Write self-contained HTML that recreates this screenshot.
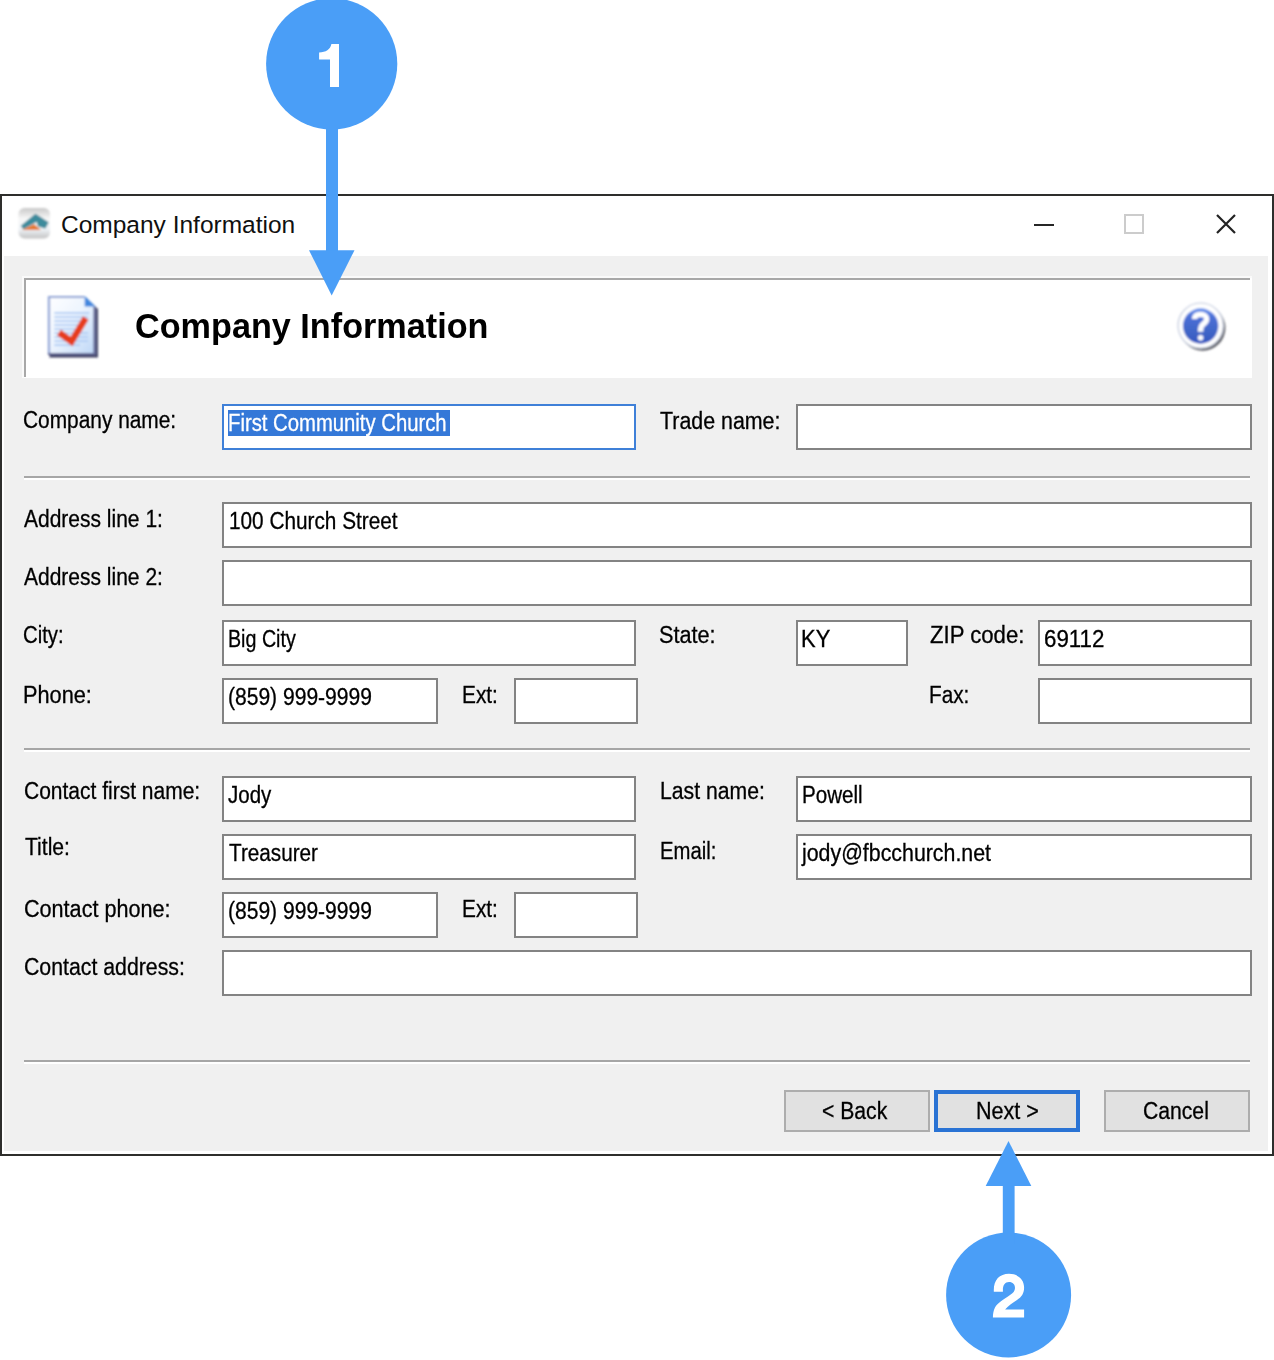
<!DOCTYPE html>
<html><head><meta charset="utf-8"><style>
html,body{margin:0;padding:0;background:#fff;width:1274px;height:1360px;overflow:hidden;position:relative;}
.t{position:absolute;font-family:"Liberation Sans", sans-serif;line-height:1;white-space:nowrap;transform-origin:0 0;}
.b{position:absolute;}
svg{position:absolute;overflow:visible;}
</style></head><body>
<div class="b" style="left:0px;top:194px;width:1274px;height:962px;background:#2e2e2c;"></div><div class="b" style="left:2px;top:196px;width:1270px;height:958px;background:#ffffff;"></div><div class="b" style="left:4px;top:256px;width:1264px;height:895px;background:#f0f0f0;"></div><svg style="left:0;top:0" width="1274" height="260" viewBox="0 0 1274 260">
<defs>
<linearGradient id="ig" x1="0" y1="0" x2="0" y2="1">
<stop offset="0" stop-color="#c9c9c9"/><stop offset="0.35" stop-color="#f7f7f7"/><stop offset="0.7" stop-color="#eef2f6"/><stop offset="1" stop-color="#c4c4c4"/>
</linearGradient>
</defs>
<g filter="url(#soft)"><rect x="18.5" y="208" width="31.5" height="30.5" rx="6" fill="url(#ig)"/>
<path d="M21.5 226 L35.5 214.5 L48 222.5 L45 228 L38.5 226 L37 221 L23.5 228.5 Z" fill="#3d8b9c" stroke="#3d8b9c" stroke-width="1.2" stroke-linejoin="round"/>
<path d="M22 230 L34 224 Q36.5 226 41 230 Z" fill="#e57a34"/>
</g>
<rect x="1034" y="224" width="20" height="2" fill="#262626"/>
<rect x="1125" y="215" width="18" height="18" fill="none" stroke="#cccccc" stroke-width="2"/>
<path d="M1217 215 L1235 233 M1235 215 L1217 233" stroke="#222" stroke-width="2.2" fill="none"/>
</svg>
<div class="t" style="left:61.00px;top:212.66px;font-size:24.5px;font-weight:400;color:#101010;">Company Information</div>
<div class="b" style="left:22px;top:276px;width:1230px;height:102px;background:#fafafa;"></div><div class="b" style="left:24px;top:278px;width:1228px;height:100px;background:#ffffff;"></div><div class="b" style="left:24px;top:278px;width:1226px;height:2px;background:#a8a8a8;"></div><div class="b" style="left:24px;top:278px;width:2px;height:99px;background:#a8a8a8;"></div><svg style="left:0;top:0" width="1274" height="400" viewBox="0 0 1274 400">
<defs>
<linearGradient id="dg" x1="0" y1="0" x2="1" y2="1">
<stop offset="0" stop-color="#ffffff"/><stop offset="0.45" stop-color="#eef5fe"/><stop offset="1" stop-color="#bcd6f6"/>
</linearGradient>
<linearGradient id="hg" x1="0" y1="0" x2="0" y2="1">
<stop offset="0" stop-color="#6a96ee"/><stop offset="0.25" stop-color="#4a6fd6"/><stop offset="0.7" stop-color="#3f64c6"/><stop offset="1" stop-color="#3455c0"/>
</linearGradient>
<filter id="soft" x="-10%" y="-10%" width="120%" height="120%"><feGaussianBlur stdDeviation="0.9"/></filter>
</defs>
<g filter="url(#soft)">
<path d="M49 297.5 L86 297.5 L98 309 L98 357.6 L49.5 357.6 Z" fill="#404264" opacity="1"/>
<path d="M48 296 L84.7 296 L95.5 306.6 L95.5 355 L48 355 Z" fill="url(#dg)"/>
<path d="M49 355 L49 297 L84.5 297" fill="none" stroke="#8ea3d6" stroke-width="2.2"/>
<path d="M94.5 306.5 L94.5 354 L48 354" fill="none" stroke="#5d6191" stroke-width="2.2"/>
<path d="M84.7 296 L84.7 306.6 L95.5 306.6 Z" fill="#3f86de"/>
<g stroke="#b4cff5" stroke-width="2">
<line x1="54.3" y1="313" x2="89.3" y2="313"/><line x1="54.3" y1="317" x2="88" y2="317"/><line x1="54.3" y1="321" x2="86" y2="321"/><line x1="54.3" y1="325" x2="83" y2="325"/><line x1="54.3" y1="329" x2="75" y2="329"/><line x1="54.3" y1="333" x2="88" y2="333"/><line x1="54.3" y1="337" x2="88" y2="337"/><line x1="54.3" y1="341" x2="88" y2="341"/><line x1="54.3" y1="345" x2="80" y2="345"/>
</g>
<path d="M59 332.5 L71.5 341.5 L85.8 318" fill="none" stroke="#e63e1c" stroke-width="6.6" stroke-linejoin="miter"/>
</g>
<g filter="url(#soft)">
<circle cx="1202.6" cy="327.9" r="22.8" fill="#55565e" opacity="0.95"/>
<circle cx="1200.7" cy="325.6" r="22.6" fill="#ffffff" stroke="#bfc8dc" stroke-width="1.2"/>
<circle cx="1200.65" cy="326" r="17.7" fill="url(#hg)"/>
<path d="M1194.6 319 C1194.6 315.5 1197 314.4 1200.6 314.4 C1204.5 314.4 1206.7 316.5 1206.7 319 C1206.7 322 1204 323.5 1202.3 325 C1200.9 326.3 1200.6 327.5 1200.6 331.7" fill="none" stroke="#fff" stroke-width="5.4"/>
<circle cx="1200.6" cy="337.7" r="2.8" fill="#fff"/>
</g>
</svg>
<div class="t" style="left:135.30px;top:309.17px;font-size:34.3px;font-weight:700;color:#000;transform:scaleX(0.9974);">Company Information</div>
<div class="b" style="left:222px;top:404px;width:414px;height:46px;background:#fff;border:2px solid #3f80d8;box-sizing:border-box;"></div><div class="b" style="left:228px;top:410px;width:222px;height:26px;background:#3478d8;"></div><div class="b" style="left:796px;top:404px;width:456px;height:46px;background:#fff;border:2px solid #838383;box-sizing:border-box;"></div><div class="b" style="left:24px;top:476px;width:1226px;height:2px;background:#a6a6a6;"></div><div class="b" style="left:24px;top:478px;width:1226px;height:2px;background:#ffffff;"></div><div class="b" style="left:222px;top:502px;width:1030px;height:46px;background:#fff;border:2px solid #838383;box-sizing:border-box;"></div><div class="b" style="left:222px;top:560px;width:1030px;height:46px;background:#fff;border:2px solid #838383;box-sizing:border-box;"></div><div class="b" style="left:222px;top:620px;width:414px;height:46px;background:#fff;border:2px solid #838383;box-sizing:border-box;"></div><div class="b" style="left:796px;top:620px;width:112px;height:46px;background:#fff;border:2px solid #838383;box-sizing:border-box;"></div><div class="b" style="left:1038px;top:620px;width:214px;height:46px;background:#fff;border:2px solid #838383;box-sizing:border-box;"></div><div class="b" style="left:222px;top:678px;width:216px;height:46px;background:#fff;border:2px solid #838383;box-sizing:border-box;"></div><div class="b" style="left:514px;top:678px;width:124px;height:46px;background:#fff;border:2px solid #838383;box-sizing:border-box;"></div><div class="b" style="left:1038px;top:678px;width:214px;height:46px;background:#fff;border:2px solid #838383;box-sizing:border-box;"></div><div class="b" style="left:24px;top:748px;width:1226px;height:2px;background:#a6a6a6;"></div><div class="b" style="left:24px;top:750px;width:1226px;height:2px;background:#ffffff;"></div><div class="b" style="left:222px;top:776px;width:414px;height:46px;background:#fff;border:2px solid #838383;box-sizing:border-box;"></div><div class="b" style="left:796px;top:776px;width:456px;height:46px;background:#fff;border:2px solid #838383;box-sizing:border-box;"></div><div class="b" style="left:222px;top:834px;width:414px;height:46px;background:#fff;border:2px solid #838383;box-sizing:border-box;"></div><div class="b" style="left:796px;top:834px;width:456px;height:46px;background:#fff;border:2px solid #838383;box-sizing:border-box;"></div><div class="b" style="left:222px;top:892px;width:216px;height:46px;background:#fff;border:2px solid #838383;box-sizing:border-box;"></div><div class="b" style="left:514px;top:892px;width:124px;height:46px;background:#fff;border:2px solid #838383;box-sizing:border-box;"></div><div class="b" style="left:222px;top:950px;width:1030px;height:46px;background:#fff;border:2px solid #838383;box-sizing:border-box;"></div><div class="b" style="left:24px;top:1060px;width:1226px;height:2px;background:#a6a6a6;"></div><div class="b" style="left:24px;top:1062px;width:1226px;height:2px;background:#ffffff;"></div><div class="t" style="left:22.80px;top:408.81px;font-size:23.5px;font-weight:400;color:#000;transform:scaleX(0.8883);-webkit-text-stroke:0.3px currentColor;">Company name:</div>
<div class="t" style="left:660.40px;top:409.61px;font-size:23.5px;font-weight:400;color:#000;transform:scaleX(0.9099);-webkit-text-stroke:0.3px currentColor;">Trade name:</div>
<div class="t" style="left:23.80px;top:507.71px;font-size:23.5px;font-weight:400;color:#000;transform:scaleX(0.8935);-webkit-text-stroke:0.3px currentColor;">Address line 1:</div>
<div class="t" style="left:23.80px;top:565.51px;font-size:23.5px;font-weight:400;color:#000;transform:scaleX(0.8935);-webkit-text-stroke:0.3px currentColor;">Address line 2:</div>
<div class="t" style="left:23.40px;top:624.21px;font-size:23.5px;font-weight:400;color:#000;transform:scaleX(0.8630);-webkit-text-stroke:0.3px currentColor;">City:</div>
<div class="t" style="left:659.48px;top:624.21px;font-size:23.5px;font-weight:400;color:#000;transform:scaleX(0.9220);-webkit-text-stroke:0.3px currentColor;">State:</div>
<div class="t" style="left:930.00px;top:624.11px;font-size:23.5px;font-weight:400;color:#000;transform:scaleX(0.9424);-webkit-text-stroke:0.3px currentColor;">ZIP code:</div>
<div class="t" style="left:23.38px;top:684.21px;font-size:23.5px;font-weight:400;color:#000;transform:scaleX(0.9250);-webkit-text-stroke:0.3px currentColor;">Phone:</div>
<div class="t" style="left:462.11px;top:684.01px;font-size:23.5px;font-weight:400;color:#000;transform:scaleX(0.8868);-webkit-text-stroke:0.3px currentColor;">Ext:</div>
<div class="t" style="left:929.02px;top:683.81px;font-size:23.5px;font-weight:400;color:#000;transform:scaleX(0.8818);-webkit-text-stroke:0.3px currentColor;">Fax:</div>
<div class="t" style="left:23.60px;top:779.61px;font-size:23.5px;font-weight:400;color:#000;transform:scaleX(0.8934);-webkit-text-stroke:0.3px currentColor;">Contact first name:</div>
<div class="t" style="left:659.50px;top:779.81px;font-size:23.5px;font-weight:400;color:#000;transform:scaleX(0.9018);-webkit-text-stroke:0.3px currentColor;">Last name:</div>
<div class="t" style="left:25.20px;top:835.71px;font-size:23.5px;font-weight:400;color:#000;transform:scaleX(0.8980);-webkit-text-stroke:0.3px currentColor;">Title:</div>
<div class="t" style="left:659.54px;top:839.71px;font-size:23.5px;font-weight:400;color:#000;transform:scaleX(0.8635);-webkit-text-stroke:0.3px currentColor;">Email:</div>
<div class="t" style="left:23.60px;top:898.11px;font-size:23.5px;font-weight:400;color:#000;transform:scaleX(0.9190);-webkit-text-stroke:0.3px currentColor;">Contact phone:</div>
<div class="t" style="left:462.11px;top:898.11px;font-size:23.5px;font-weight:400;color:#000;transform:scaleX(0.8868);-webkit-text-stroke:0.3px currentColor;">Ext:</div>
<div class="t" style="left:23.60px;top:956.11px;font-size:23.5px;font-weight:400;color:#000;transform:scaleX(0.9057);-webkit-text-stroke:0.3px currentColor;">Contact address:</div>
<div class="t" style="left:228.14px;top:411.91px;font-size:23.5px;font-weight:400;color:#fff;transform:scaleX(0.8631);-webkit-text-stroke:0.3px currentColor;">First Community Church</div>
<div class="t" style="left:229.02px;top:510.01px;font-size:23.5px;font-weight:400;color:#000;transform:scaleX(0.8842);-webkit-text-stroke:0.3px currentColor;">100 Church Street</div>
<div class="t" style="left:227.76px;top:627.91px;font-size:23.5px;font-weight:400;color:#000;transform:scaleX(0.8370);-webkit-text-stroke:0.3px currentColor;">Big City</div>
<div class="t" style="left:801.07px;top:627.91px;font-size:23.5px;font-weight:400;color:#000;transform:scaleX(0.9333);-webkit-text-stroke:0.3px currentColor;">KY</div>
<div class="t" style="left:1043.80px;top:627.91px;font-size:23.5px;font-weight:400;color:#000;transform:scaleX(0.9492);-webkit-text-stroke:0.3px currentColor;">69112</div>
<div class="t" style="left:227.60px;top:686.11px;font-size:23.5px;font-weight:400;color:#000;transform:scaleX(0.8956);-webkit-text-stroke:0.3px currentColor;">(859) 999-9999</div>
<div class="t" style="left:227.80px;top:784.01px;font-size:23.5px;font-weight:400;color:#000;transform:scaleX(0.8720);-webkit-text-stroke:0.3px currentColor;">Jody</div>
<div class="t" style="left:802.12px;top:783.71px;font-size:23.5px;font-weight:400;color:#000;transform:scaleX(0.8750);-webkit-text-stroke:0.3px currentColor;">Powell</div>
<div class="t" style="left:229.00px;top:841.61px;font-size:23.5px;font-weight:400;color:#000;transform:scaleX(0.8812);-webkit-text-stroke:0.3px currentColor;">Treasurer</div>
<div class="t" style="left:802.11px;top:841.61px;font-size:23.5px;font-weight:400;color:#000;transform:scaleX(0.9086);-webkit-text-stroke:0.3px currentColor;">jody@fbcchurch.net</div>
<div class="t" style="left:227.60px;top:900.11px;font-size:23.5px;font-weight:400;color:#000;transform:scaleX(0.8956);-webkit-text-stroke:0.3px currentColor;">(859) 999-9999</div>
<div class="b" style="left:784px;top:1090px;width:146px;height:42px;background:#e1e1e1;border:2px solid #adadad;box-sizing:border-box;"></div><div class="b" style="left:934px;top:1090px;width:146px;height:42px;background:#e1e1e1;border:4px solid #2a73d4;box-sizing:border-box;"></div><div class="b" style="left:1104px;top:1090px;width:146px;height:42px;background:#e1e1e1;border:2px solid #adadad;box-sizing:border-box;"></div><div class="t" style="left:822.30px;top:1099.91px;font-size:23.5px;font-weight:400;color:#000;transform:scaleX(0.9000);-webkit-text-stroke:0.3px currentColor;">&lt; Back</div>
<div class="t" style="left:975.58px;top:1099.91px;font-size:23.5px;font-weight:400;color:#000;transform:scaleX(0.9179);-webkit-text-stroke:0.3px currentColor;">Next &gt;</div>
<div class="t" style="left:1142.70px;top:1099.91px;font-size:23.5px;font-weight:400;color:#000;transform:scaleX(0.9000);-webkit-text-stroke:0.3px currentColor;">Cancel</div>
<svg style="left:0;top:0" width="1274" height="1360" viewBox="0 0 1274 1360">
<circle cx="331.7" cy="63.8" r="65.6" fill="#4a9ef7"/>
<rect x="326" y="120" width="12" height="132" fill="#4a9ef7"/>
<path d="M309 250.2 L354.5 250.2 L331.7 295.6 Z" fill="#4a9ef7"/>
<circle cx="1008.6" cy="1295" r="62.5" fill="#4a9ef7"/>
<rect x="1002.8" y="1184" width="11.8" height="60" fill="#4a9ef7"/>
<path d="M985.7 1186 L1031.3 1186 L1008.5 1141 Z" fill="#4a9ef7"/>
</svg>
<svg style="left:0;top:0" width="1274" height="1360" viewBox="0 0 1274 1360"><path d="M330 87 L339 87 L339 44 L331.4 44 C330.2 49.5 326 52.4 319.1 52.4 L319.1 59.4 L330 59.4 Z" fill="#fff"/><path d="M992.9 1317.5 L1024.1 1317.5 L1024.1 1309.6 L1005.1 1309.6 C1008 1306 1012.5 1303 1017 1300 C1021.5 1297 1024.1 1293.5 1024.1 1287.5 C1024.1 1279 1017.5 1273.8 1009 1273.8 C999.5 1273.8 993.8 1280 993.8 1290 L993.8 1291.7 L1002.9 1291.7 L1002.9 1290 C1002.9 1285 1005 1282 1009 1282 C1012.8 1282 1015 1284.5 1015 1288 C1015 1291 1013 1293 1010 1295 C1003.5 1299.5 997.5 1303 995 1307.5 C993.5 1310.5 992.9 1313.5 992.9 1317.5 Z" fill="#fff"/></svg>
</body></html>
